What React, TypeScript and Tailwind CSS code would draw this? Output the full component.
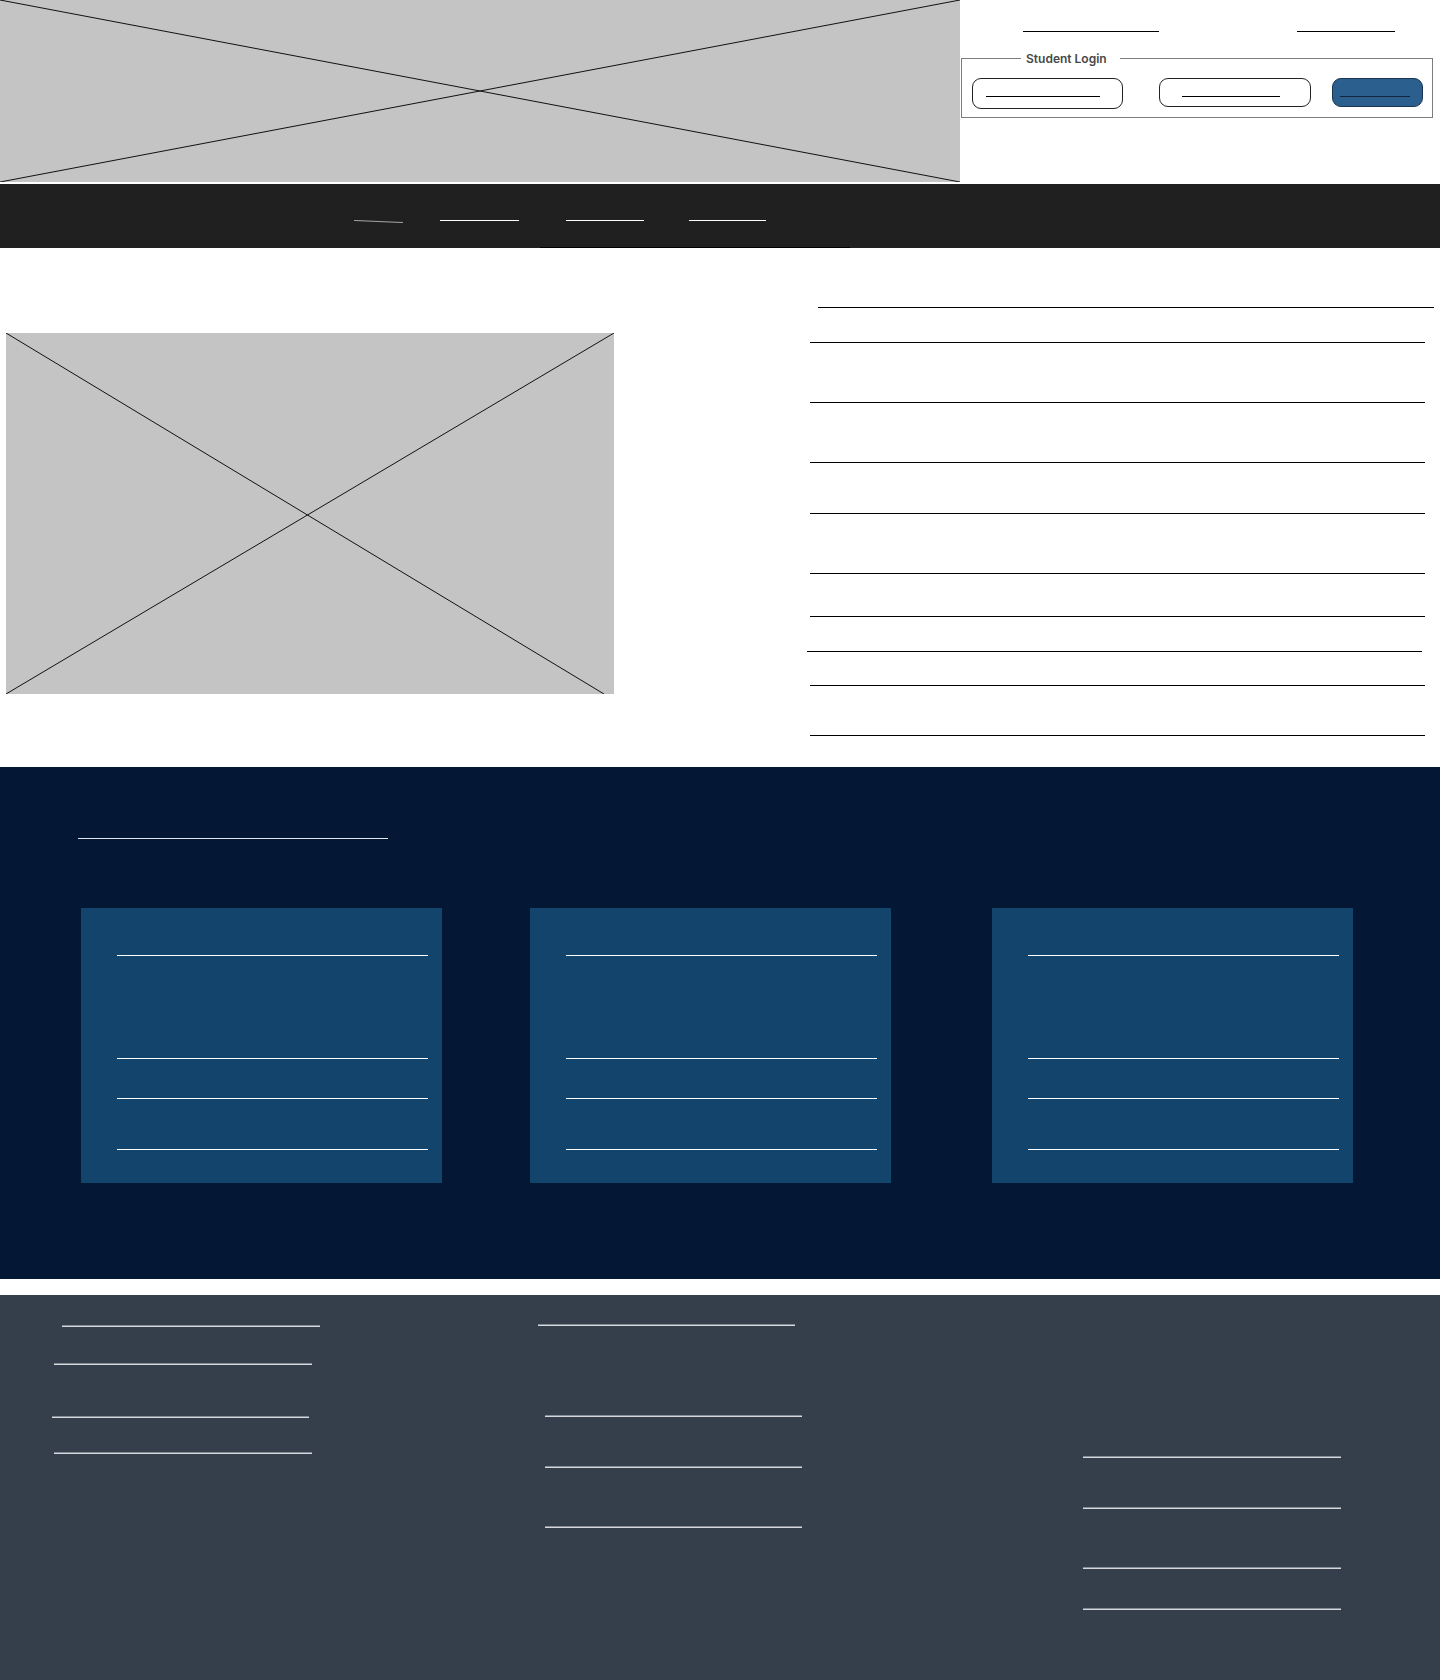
import React from 'react';

// grey image placeholder with a cross through it
const Placeholder: React.FC<{ w: number; h: number; x2?: number; className?: string }> = ({ w, h, x2, className }) => (
  <div className={`bg-[#c4c4c4] ${className ?? ''}`}>
    <svg className="block w-full h-full" viewBox={`0 0 ${w} ${h}`} preserveAspectRatio="none">
      <line x1={0} y1={0} x2={x2 ?? w} y2={h} stroke="#111" strokeWidth={1} />
      <line x1={0} y1={h} x2={w} y2={0} stroke="#111" strokeWidth={1} />
    </svg>
  </div>
);

const FootLine: React.FC<{ className: string }> = ({ className }) => (
  <div className={`${className} h-[2px] border-t border-[#858c96] bg-[#d5d8dd]`} />
);

export default function App() {
  return (
    <div className="w-[1440px] min-h-[1680px] bg-white font-['Inter',sans-serif]">
      {/* Header */}
      <header className="flex h-[182px]">
        <Placeholder w={960} h={182} className="w-[960px] h-full" />
        <div className="flex-1 flex flex-col">
          <div className="flex mt-[31px]">
            <div className="ml-[63px] w-[136px] h-px bg-black" />
            <div className="ml-[138px] w-[98px] h-px bg-black" />
          </div>
          <fieldset className="mt-[19px] ml-px mr-[7px] border border-[#7d7d7d] pl-[10px] pr-[9px] pb-[8px]">
            <legend className="ml-[49px] pl-[5px] pr-[13px] text-[12px] leading-[15px] font-semibold text-[#474747]">
              Student Login
            </legend>
            <div className="flex items-start mt-[12px]">
              <div className="w-[151px] h-[31px] rounded-[9px] border border-[#222] flex flex-col">
                <div className="mt-[17px] ml-[13px] w-[114px] h-px bg-black" />
              </div>
              <div className="ml-[36px] w-[152px] h-[29px] rounded-[9px] border border-[#222] flex flex-col">
                <div className="mt-[17px] ml-[22px] w-[98px] h-px bg-black" />
              </div>
              <button className="ml-[21px] w-[91px] h-[29px] rounded-[9px] border border-[#1c3550] bg-[#2a5f8e] flex flex-col">
                <span className="mt-[17px] ml-[7px] w-[70px] h-px bg-[#14243a]" />
              </button>
            </div>
          </fieldset>
        </div>
      </header>

      {/* Nav */}
      <nav className="mt-[2px] h-[64px] bg-[#202020] flex flex-col">
        <div className="flex items-start pt-[36px]">
          <svg className="ml-[354px] block" width={49} height={3}>
            <line x1={0} y1={0.5} x2={49} y2={2.5} stroke="#9a9a9a" strokeWidth={1.2} />
          </svg>
          <div className="ml-[37px] w-[79px] h-px bg-white" />
          <div className="ml-[47px] w-[78px] h-px bg-white" />
          <div className="ml-[45px] w-[77px] h-px bg-white" />
        </div>
        <div className="mt-auto ml-[540px] w-[310px] h-px bg-black" />
      </nav>

      {/* Main */}
      <section className="flex h-[519px]">
        <Placeholder w={608} h={361} x2={598} className="ml-[6px] mt-[85px] w-[608px] h-[361px]" />
        <div className="ml-[193px] w-[630px] flex flex-col">
          <div className="mt-[59px] ml-[11px] w-[616px] h-px bg-black" />
          <div className="mt-[34px] ml-[3px] w-[615px] h-px bg-black" />
          <div className="mt-[59px] ml-[3px] w-[615px] h-px bg-black" />
          <div className="mt-[59px] ml-[3px] w-[615px] h-px bg-black" />
          <div className="mt-[50px] ml-[3px] w-[615px] h-px bg-black" />
          <div className="mt-[59px] ml-[3px] w-[615px] h-px bg-black" />
          <div className="mt-[42px] ml-[3px] w-[615px] h-px bg-black" />
          <div className="mt-[34px] ml-0 w-[615px] h-px bg-black" />
          <div className="mt-[33px] ml-[3px] w-[615px] h-px bg-black" />
          <div className="mt-[49px] ml-[3px] w-[615px] h-px bg-black" />
        </div>
      </section>

      {/* Cards band */}
      <section className="h-[512px] bg-[#041735] flex flex-col">
        <div className="mt-[71px] ml-[78px] w-[310px] h-px bg-[#e3e6ea]" />
        <div className="flex mt-[69px]">
          {['ml-[81px]', 'ml-[88px]', 'ml-[101px]'].map((m) => (
            <div key={m} className={`${m} w-[361px] h-[275px] bg-[#13446c] flex flex-col pl-[36px]`}>
              <div className="mt-[47px] w-[311px] h-px bg-white" />
              <div className="mt-[102px] w-[311px] h-px bg-white" />
              <div className="mt-[39px] w-[311px] h-px bg-white" />
              <div className="mt-[50px] w-[311px] h-px bg-white" />
            </div>
          ))}
        </div>
      </section>

      {/* Footer */}
      <footer className="mt-[16px] h-[385px] bg-[#353f4c] flex">
        <div className="w-[320px] flex flex-col">
          <FootLine className="mt-[30px] ml-[62px] w-[258px]" />
          <FootLine className="mt-[36px] ml-[54px] w-[258px]" />
          <FootLine className="mt-[51px] ml-[52px] w-[257px]" />
          <FootLine className="mt-[34px] ml-[54px] w-[258px]" />
        </div>
        <div className="w-[482px] flex flex-col">
          <FootLine className="mt-[29px] ml-[218px] w-[257px]" />
          <FootLine className="mt-[89px] ml-[225px] w-[257px]" />
          <FootLine className="mt-[49px] ml-[225px] w-[257px]" />
          <FootLine className="mt-[58px] ml-[225px] w-[257px]" />
        </div>
        <div className="flex-1 flex flex-col">
          <FootLine className="mt-[161px] ml-[281px] w-[258px]" />
          <FootLine className="mt-[49px] ml-[281px] w-[258px]" />
          <FootLine className="mt-[58px] ml-[281px] w-[258px]" />
          <FootLine className="mt-[39px] ml-[281px] w-[258px]" />
        </div>
      </footer>
    </div>
  );
}
